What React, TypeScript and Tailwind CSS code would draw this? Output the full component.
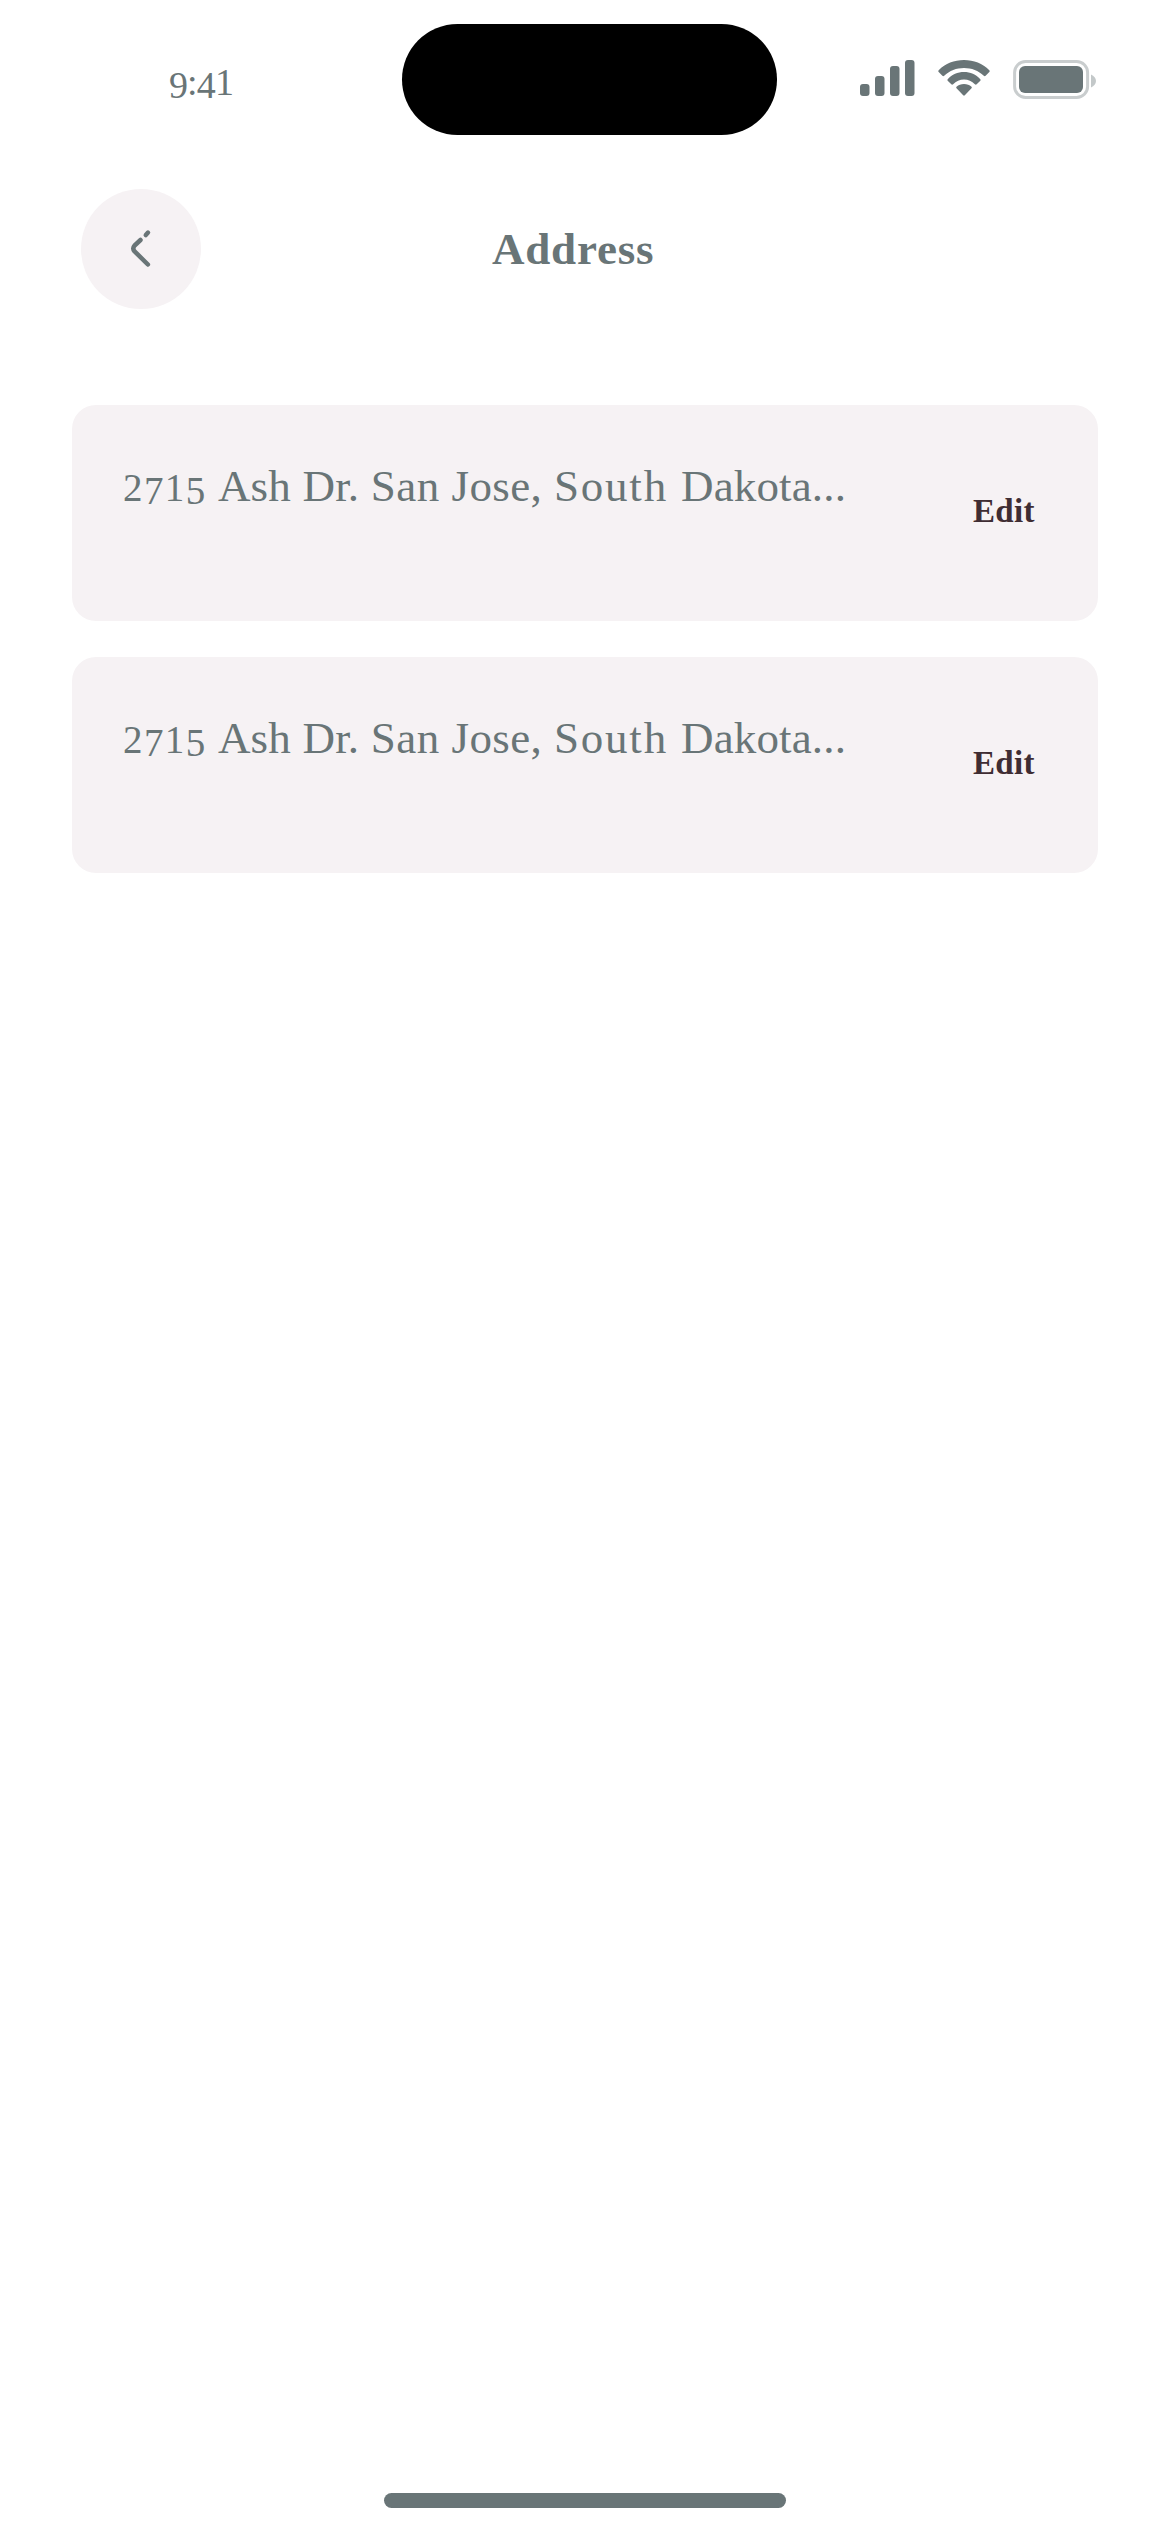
const addresses = [1, 2];

function SignalIcon() {
  return (
    <svg className="h-9 w-[55px]" viewBox="0 0 55 36" fill="#697577">
      <rect x="0" y="24" width="9.5" height="12" rx="3" />
      <rect x="15" y="16" width="9.5" height="20" rx="3" />
      <rect x="30" y="6" width="9.5" height="30" rx="3" />
      <rect x="45" y="0" width="9.5" height="36" rx="3" />
    </svg>
  );
}

function WifiIcon() {
  return (
    <svg className="ml-[23px] h-9 w-[52px]" viewBox="0 0 52 36" fill="#697577">
      <path d="M.7 10.2C7.400 3.600 16.200 0 26 0s18.600 3.600 25.300 10.200c.6.6.6 1.200 0 1.800l-3.700 3.700c-.6.6-1.200.6-1.800 0C40.500 10.700 33.500 8 26 8S11.500 10.700 6.200 15.700c-.6.6-1.200.6-1.800 0L.7 12c-.6-.6-.6-1.200 0-1.800Z" />
      <path d="M9.700 19.200C14 14.500 19.700 12 26 12s12 2.500 16.300 7.200c.5.6.5 1.100 0 1.600l-3.600 3.500c-.6.6-1.200.6-1.800 0-3-3.100-6.700-4.800-10.900-4.800s-7.900 1.700-10.900 4.800c-.6.6-1.200.6-1.800 0l-3.600-3.500c-.5-.5-.5-1 0-1.600Z" />
      <path d="M18.500 26.800C20.500 25 23 24 26 24s5.500 1 7.500 2.800c.5.5.5 1 0 1.500l-6.700 6.900c-.6.600-1 .600-1.600 0l-6.700-6.900c-.5-.5-.5-1 0-1.500Z" />
    </svg>
  );
}

function BatteryIcon() {
  return (
    <svg className="ml-[23px] h-[39px] w-[84px]" viewBox="0 0 84 39" fill="none">
      <rect x="1.600" y="1.500" width="73" height="36" rx="11" stroke="#c9cdce" strokeWidth="3" />
      <rect x="6" y="6" width="64" height="27" rx="6" fill="#697577" />
      <path d="M78 14.500c3 1.200 5 3.800 5 6.500s-2 5.300-5 6.500Z" fill="#c3c8c9" />
    </svg>
  );
}

function BackIcon() {
  return (
    <svg className="size-[60px]" viewBox="0 0 60 60" fill="none" stroke="#697577" strokeWidth="4.500" strokeLinecap="round" strokeLinejoin="round">
      <path d="M34.800 16 37 13.600" />
      <path d="M29.500 21.500 23.600 27Q21 30 23.600 32.900L36.900 46" transform="translate(0 -.5)" />
    </svg>
  );
}

function AddressCard() {
  return (
    <article className="flex h-[216px] items-start justify-between rounded-3xl bg-[#f6f2f4] pl-[51px] pr-[63px]">
      <p className="mt-[57px] whitespace-nowrap text-[45px] leading-[48px]">
        <span className="text-[39px] tracking-[1.400px]">
          2<span className="relative top-[3px]">7</span>1<span className="relative top-[3px]">5</span>
        </span>{" "}
        <span className="tracking-[0.200px]">Ash </span>
        <span className="tracking-[0.200px]">Dr. </span>
        <span className="tracking-[0.500px]">San </span>
        <span className="tracking-[0.400px]">Jose, </span>
        <span className="tracking-[1.800px]">South </span>
        <span className="tracking-[0.150px]">Dakota...</span>
      </p>
      <button className="mt-[88px] text-[33px] font-bold leading-[36px] tracking-[0.400px] text-[#3f2d33]">Edit</button>
    </article>
  );
}

export default function App() {
  return (
    <div className="flex h-[2532px] w-[1170px] flex-col bg-white font-['Liberation_Serif',serif] text-[#697577]">
      <header className="flex h-[141px] items-start">
        <div className="w-[402px] pl-[169px] pt-[62px] text-[38px] leading-[40px] tracking-[-0.900px]">
          <span className="relative top-[3px]">9</span>:<span className="relative top-[3px]">4</span>1
        </div>
        <div className="mt-6 h-[111px] w-[375px] rounded-full bg-black" />
        <div className="ml-[83px] mt-[60px] flex items-start">
          <SignalIcon />
          <WifiIcon />
          <BatteryIcon />
        </div>
      </header>

      <nav className="mt-12 flex h-[120px] items-center pl-[81px]">
        <button aria-label="Back" className="flex size-[120px] items-center justify-center rounded-full bg-[#f6f2f4]">
          <BackIcon />
        </button>
        <h1 className="ml-[291px] text-[45px] font-bold leading-[48px] tracking-[0.800px]">Address</h1>
      </nav>

      <main className="mt-24 flex flex-col gap-9 px-[72px]">
        {addresses.map((id) => (
          <AddressCard key={id} />
        ))}
      </main>

      <div className="mx-auto mb-6 mt-auto h-[15px] w-[402px] rounded-full bg-[#697577]" />
    </div>
  );
}
